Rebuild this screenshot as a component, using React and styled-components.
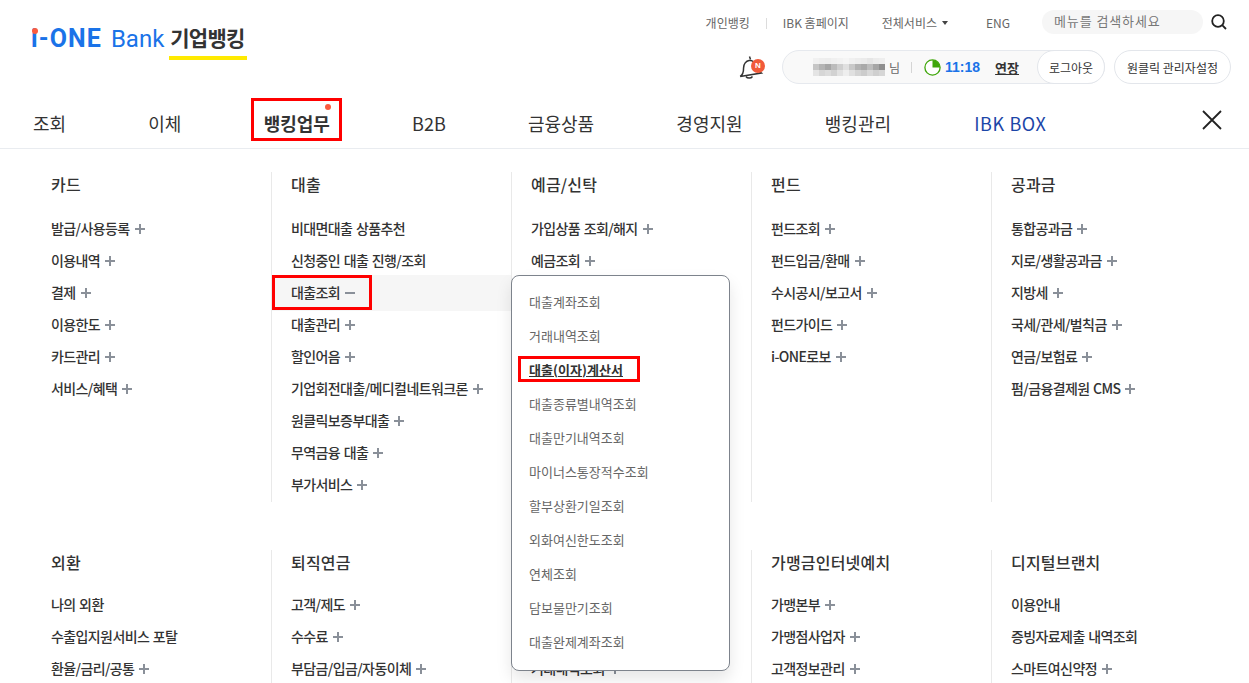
import React from "react";
import styled, { createGlobalStyle } from "styled-components";

const Global = createGlobalStyle`
  html, body { margin: 0; padding: 0; background: #fff; height: 683px; overflow: hidden; }
  body { font-family: "Noto Sans CJK KR", "Noto Sans", sans-serif; color: #333; }
  * { box-sizing: border-box; }
`;

const Page = styled.div`position: relative; width: 1249px; height: 683px; overflow: hidden;`;
const Header = styled.header`height: 149px; border-bottom: 1px solid #e9ecf0; display: flex; flex-direction: column;`;
const TopRow = styled.div`height: 99px; display: flex; justify-content: space-between; padding: 0 21px 0 31px;`;
const Brand = styled.div`display: flex; align-items: flex-start; padding-top: 23px; gap: 5px;`;
const Logo = styled.span`
  position: relative; font-family: Roboto, sans-serif; font-size: 24px; line-height: 30px; color: #1a73e8; margin-top: 1px;
  white-space: nowrap; letter-spacing: 0;
  b { font-weight: 700; letter-spacing: 1.1px; margin-right: 9px; font-size: 25px; }
  &::before { content: ""; position: absolute; left: 1px; top: 4px; width: 6px; height: 6px; border-radius: 50%; background: #fb5b3f; }
`;
const BrandName = styled.span`
  display: block; font-size: 21px; font-weight: 700; line-height: 29px; color: #333; letter-spacing: -0.8px;
  border-bottom: 4px solid #ffea00; padding: 0 3px 4px 1px; white-space: nowrap;
`;
const Utils = styled.div`display: flex; flex-direction: column; align-items: flex-end;`;
const UtilTop = styled.div`height: 50px; padding-top: 9px; display: flex; align-items: flex-start;`;
const UtilLink = styled.a`
  font-size: 12px; line-height: 28px; color: #666; letter-spacing: 0; white-space: nowrap; display: flex; align-items: center; gap: 5px;
  padding: 0 ${p => (p.$wide ? 21 : 16)}px 0 17px; position: relative;
  & + &::before { content: ""; position: absolute; left: 0; top: 9px; width: 1px; height: 11px; background: #dcdcdc; }
`;
const Caret = styled.i`width: 0; height: 0; border: 3px solid transparent; border-top: 4px solid #444; border-bottom: 0;`;
const SearchBox = styled.div`
  width: 161px; height: 24px; margin: 1px 0 0 16px; border-radius: 12px; background: #f6f6f6; color: #777; font-size: 13px; line-height: 22px;
  padding-left: 12px; letter-spacing: 0.9px; white-space: nowrap;
`;
const SearchBtn = styled.span`margin: 3px 0 0 7px; width: 18px; height: 18px; display: block;`;
const UtilBottom = styled.div`display: flex; align-items: center; height: 34px; margin-right: -3px;`;
const Bell = styled.span`position: relative; width: 26px; height: 26px; margin-right: 17px; display: block;`;
const BellBadge = styled.b`
  position: absolute; right: 0; top: 5px; width: 14px; height: 14px; border-radius: 50%; background: #f15a3a; color: #fff;
  font: 700 8px/14px "Liberation Sans", sans-serif; text-align: center;
`;
const Session = styled.div`
  width: 323px; height: 34px; border: 1px solid #e6e9ee; border-radius: 17px; background: #f9f9f9; display: flex; align-items: center;
  padding-left: 30px; position: relative;
`;
const Mosaic = styled.span`display: grid; grid-template-columns: repeat(12, 6px); grid-auto-rows: 6px; width: 72px; height: 18px;`;
const Cell = styled.i`display: block;`;
const Nim = styled.span`font-size: 12px; color: #666; margin-left: 4px;`;
const Divider = styled.i`width: 1px; height: 11px; background: #d5d5d5; margin: 0 12px 0 11px;`;
const Time = styled.b`font: 700 14px/16px "Liberation Sans", sans-serif; color: #1a73e8; margin-left: 4px;`;
const Extend = styled.a`font-size: 13px; font-weight: 700; color: #333; text-decoration: underline; letter-spacing: 0; margin-left: 15px;`;
const Pill = styled.a`
  height: 34px; border: 1px solid #e3e6eb; border-radius: 17px; background: #fff; display: flex; align-items: center; justify-content: center;
  font-size: 12px; color: #333; letter-spacing: 0; white-space: nowrap;
  width: ${p => p.$w}px;
`;
const LogoutPill = styled(Pill)`position: absolute; right: -1px; top: -1px;`;
const AdminPill = styled(Pill)`margin-left: 9px;`;
const Nav = styled.nav`flex: 1; display: flex; align-items: center; padding: 0 0 0 33px; gap: 82.2px; position: relative;`;
const NavItem = styled.a`
  position: relative; font-size: 18px; font-weight: ${p => (p.$active ? 700 : 400)}; color: ${p => (p.$box ? "#1c46a8" : "#333")};
  letter-spacing: ${p => (p.$box ? "0.6px" : "0")}; margin-left: ${p => (p.$box ? 1 : 0)}px; line-height: 50px; white-space: nowrap;
`;
const Dot = styled.i`position: absolute; right: -1px; top: 6px; width: 6px; height: 6px; border-radius: 50%; background: #fb5b3f;`;
const RedBox = styled.i`position: absolute; border: 3px solid #f00; inset: ${p => p.$inset}; pointer-events: none; z-index: 3;`;
const CloseBtn = styled.span`position: absolute; right: 26px; top: 11px; width: 22px; height: 22px; display: block;`;

const Section = styled.section`display: grid; grid-template-columns: repeat(5, 240px); align-items: start; padding-left: 31px; height: ${p => p.$h}px; padding-top: ${p => p.$pt}px;`;
const Col = styled.div`
  height: ${p => p.$h}px; & + & { border-left: 1px solid #e9e9e9; }
`;
const ColTitle = styled.h3`margin: 0 0 ${p => p.$gap}px; padding-left: ${p => (p.$first ? 20 : 19)}px; font-size: 16px; font-weight: 500; line-height: 25px; color: #333; letter-spacing: 0.2px;`;
const Row = styled.div`
  position: relative; height: 36px; margin-bottom: -4px; padding: 0 0 2px ${p => (p.$first ? 20 : 19)}px; display: flex; align-items: center; gap: 5px;
  font-size: 14px; font-weight: 500; color: #333; letter-spacing: -0.6px; word-spacing: 1px; white-space: nowrap;
  background: ${p => (p.$open ? "#f6f6f6" : "transparent")}; z-index: ${p => (p.$open ? 1 : 0)};
`;
const Sign = styled.svg`width: 10px; height: 10px; flex: none; margin-top: 1px;`;
const Popup = styled.div`
  position: absolute; left: 511px; top: 275px; width: 219px; height: 396px; background: #fff; border: 1px solid #7d838c; border-radius: 8px;
  box-shadow: 0 8px 16px rgba(0,0,0,.1); padding: 10px 0 0 17px; z-index: 2;
`;
const PopItem = styled.a`
  display: block; position: relative; height: 34px; line-height: 32px; font-size: 13px; color: #666; letter-spacing: 0; white-space: nowrap;
  ${p => p.$on && "color:#333;font-weight:700;text-decoration:underline;letter-spacing:0.05px;"}
`;

const Plus = ({ minus }) => (
  <Sign viewBox="0 0 10 10">
    <path d={minus ? "M0 5H10" : "M0 5H10M5 0V10"} stroke="#8a9099" strokeWidth="2" fill="none" />
  </Sign>
);

const row1 = [
  ["카드", [["발급/사용등록", 1], ["이용내역", 1], ["결제", 1], ["이용한도", 1], ["카드관리", 1], ["서비스/혜택", 1]]],
  ["대출", [["비대면대출 상품추천"], ["신청중인 대출 진행/조회"], ["대출조회", 2], ["대출관리", 1], ["할인어음", 1], ["기업회전대출/메디컬네트워크론", 1], ["원클릭보증부대출", 1], ["무역금융 대출", 1], ["부가서비스", 1]]],
  ["예금/신탁", [["가입상품 조회/해지", 1], ["예금조회", 1]]],
  ["펀드", [["펀드조회", 1], ["펀드입금/환매", 1], ["수시공시/보고서", 1], ["펀드가이드", 1], ["i-ONE로보", 1]]],
  ["공과금", [["통합공과금", 1], ["지로/생활공과금", 1], ["지방세", 1], ["국세/관세/벌칙금", 1], ["연금/보험료", 1], ["펌/금융결제원 CMS", 1]]],
];
const row2 = [
  ["외환", [["나의 외환"], ["수출입지원서비스 포탈"], ["환율/금리/공통", 1]]],
  ["퇴직연금", [["고객/제도", 1], ["수수료", 1], ["부담금/입금/자동이체", 1]]],
  ["", [[""], [""], ["거래내역조회", 1]]],
  ["가맹금인터넷예치", [["가맹본부", 1], ["가맹점사업자", 1], ["고객정보관리", 1]]],
  ["디지털브랜치", [["이용안내"], ["증빙자료제출 내역조회"], ["스마트여신약정", 1]]],
];
const popup = ["대출계좌조회", "거래내역조회", "대출(이자)계산서", "대출종류별내역조회", "대출만기내역조회", "마이너스통장적수조회", "할부상환기일조회", "외화여신한도조회", "연체조회", "담보물만기조회", "대출완제계좌조회"];
const nav = ["조회", "이체", "뱅킹업무", "B2B", "금융상품", "경영지원", "뱅킹관리", "IBK BOX"];
const mosaic = [
  "#f1f1f1","#eeeeee","#ededed","#f0f0f0","#f2f2f2","#f5f5f5","#f0f0f0","#ededed","#ebebeb","#e6e6e6","#ececec","#eeeeee",
  "#c6c6c6","#b4b4b4","#a6a6a6","#bcbcbc","#cfcfcf","#e0e0e0","#c8c8c8","#b2b2b2","#a9a9a9","#bdbdbd","#a6a6a6","#8f8f8f",
  "#e4e4e4","#d6d6d6","#dcdcdc","#d2d2d2","#e2e2e2","#eeeeee","#e0e0e0","#d4d4d4","#cccccc","#d9d9d9","#cfcfcf","#d6d6d6",
];

const Columns = ({ data, gap, h }) =>
  data.map(([title, items], c) => (
    <Col key={c} $h={h}>
      <ColTitle $first={c === 0} $gap={gap}>{title || "\u00a0"}</ColTitle>
      {items.map(([t, s], i) => (
        <Row key={i} $first={c === 0} $open={s === 2}>
          {t}
          {s === 1 && <Plus />}
          {s === 2 && <Plus minus />}
          {s === 2 && <RedBox $inset="0 auto 1px 0" style={{ width: 100 }} />}
        </Row>
      ))}
    </Col>
  ));

export default function App() {
  return (
    <Page>
      <Global />
      <Header>
        <TopRow>
          <Brand>
            <Logo><b>i-ONE</b>Bank</Logo>
            <BrandName>기업뱅킹</BrandName>
          </Brand>
          <Utils>
            <UtilTop>
              <UtilLink>개인뱅킹</UtilLink>
              <UtilLink>IBK 홈페이지</UtilLink>
              <UtilLink $wide>전체서비스<Caret /></UtilLink>
              <UtilLink>ENG</UtilLink>
              <SearchBox>메뉴를 검색하세요</SearchBox>
              <SearchBtn>
                <svg width="18" height="18" viewBox="0 0 18 18" fill="none" stroke="#222" strokeWidth="1.8">
                  <circle cx="8" cy="8" r="5.8" /><path d="M12.2 12.2L16 16" />
                </svg>
              </SearchBtn>
            </UtilTop>
            <UtilBottom>
              <Bell>
                <svg width="26" height="26" viewBox="0 0 26 26" fill="none" stroke="#333" strokeWidth="1.5">
                  <path d="M0 21c3-1.500 4-4 4.500-8C5 9 8 6.500 11 6.500s5.500 2.500 6 6c.6 3.500 1.800 6 4.200 8z" transform="rotate(-8 11 13)" />
                  <path d="M10.500 2.500l1 3" />
                  <path d="M7 22.500c1.500 2.200 5 2 6.500 0" />
                </svg>
                <BellBadge>N</BellBadge>
              </Bell>
              <Session>
                <Mosaic>{mosaic.map((c, i) => <Cell key={i} style={{ background: c }} />)}</Mosaic>
                <Nim>님</Nim>
                <Divider />
                <svg width="17" height="17" viewBox="0 0 17 17">
                  <circle cx="8.500" cy="8.500" r="7.600" fill="#fff" stroke="#3fa60a" strokeWidth="1.3" />
                  <path d="M8.500 8.500V1a7.500 7.500 0 0 1 7.500 7.500z" fill="#3fa60a" />
                </svg>
                <Time>11:18</Time>
                <Extend>연장</Extend>
                <LogoutPill $w={68}>로그아웃</LogoutPill>
              </Session>
              <AdminPill $w={117}>원클릭 관리자설정</AdminPill>
            </UtilBottom>
          </Utils>
        </TopRow>
        <Nav>
          {nav.map((n, i) => (
            <NavItem key={n} $active={i === 2} $box={i === 7}>
              {n}
              {i === 2 && <Dot />}
              {i === 2 && <RedBox $inset="0 -12px 7px -13px" />}
            </NavItem>
          ))}
          <CloseBtn>
            <svg width="22" height="22" viewBox="0 0 22 22" stroke="#222" strokeWidth="1.8"><path d="M2 2L20 20M20 2L2 20" /></svg>
          </CloseBtn>
        </Nav>
      </Header>
      <Section $pt={23} $h={376}>
        <Columns data={row1} gap={14} h={330} />
      </Section>
      <Section $pt={25} $h={158}>
        <Columns data={row2} gap={12} h={133} />
      </Section>
      <Popup>
        {popup.map((p, i) => (
          <PopItem key={p} $on={i === 2}>
            {p}
            {i === 2 && <RedBox $inset="2px auto 6px -11px" style={{ width: 122 }} />}
          </PopItem>
        ))}
      </Popup>
    </Page>
  );
}
